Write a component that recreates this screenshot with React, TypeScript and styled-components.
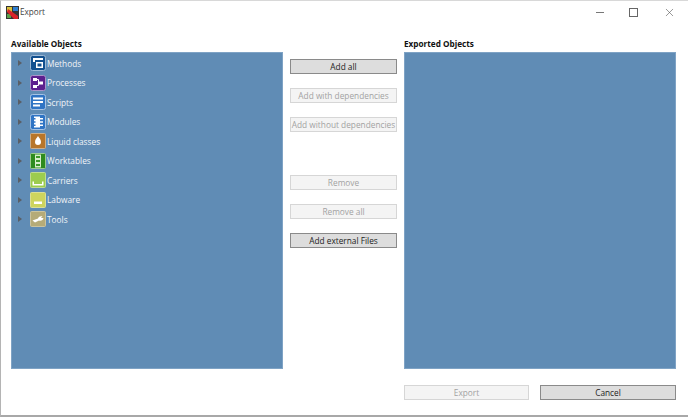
import { createGlobalStyle, styled } from "styled-components";
import { X } from "lucide-react";

const GlobalStyle = createGlobalStyle`
  html, body {
    margin: 0;
    padding: 0;
    background: #fff;
    overflow: hidden;
  }
  body {
    font-family: "Open Sans", "Noto Sans", sans-serif;
  }
`;

const trees = [
  { name: "Methods", kind: "methods" },
  { name: "Processes", kind: "processes" },
  { name: "Scripts", kind: "scripts" },
  { name: "Modules", kind: "modules" },
  { name: "Liquid classes", kind: "liquid" },
  { name: "Worktables", kind: "worktables" },
  { name: "Carriers", kind: "carriers" },
  { name: "Labware", kind: "labware" },
  { name: "Tools", kind: "tools" },
];

const TreeIcon = ({ kind }: { kind: string }) => {
  switch (kind) {
    case "methods":
      return (
        <svg width="16" height="16" viewBox="0 0 16 16">
          <rect x="0.5" y="0.5" width="15" height="15" rx="2" fill="#12508f" stroke="#9db9d6" />
          <path d="M3 3h10v2H5v2H3z" fill="#fff" />
          <path d="M6 7h7v6H6z" fill="#fff" />
          <path d="M7.5 8.500h4v3h-4z" fill="#12508f" />
        </svg>
      );
    case "processes":
      return (
        <svg width="16" height="16" viewBox="0 0 16 16">
          <rect x="0.5" y="0.5" width="15" height="15" rx="2" fill="#5c1f8e" stroke="#ab93c8" />
          <path d="M3 3h4v3H3zM9 6.500h4v3H9zM3 10h4v3H3z" fill="#fff" />
          <path d="M7 4.500h1.500v6H7M8.500 8H9" stroke="#fff" fill="none" />
        </svg>
      );
    case "scripts":
      return (
        <svg width="16" height="16" viewBox="0 0 16 16">
          <rect x="0.5" y="0.5" width="15" height="15" rx="2" fill="#2f74c4" stroke="#a6c3e4" />
          <path d="M3 3.500h10v2H3zM3 7h10v2H3zM3 10.500h7v2H3z" fill="#fff" />
        </svg>
      );
    case "modules":
      return (
        <svg width="16" height="16" viewBox="0 0 16 16">
          <rect x="0.5" y="0.5" width="15" height="15" rx="2" fill="#2f74c4" stroke="#a6c3e4" />
          <path d="M4 2.500h6v11H4z" fill="#fff" />
          <path d="M2.500 4h3v1.500h-3zM2.500 7.200h3v1.500h-3zM2.500 10.500h3V12h-3z" fill="#2f74c4" />
          <path d="M10 4h3v1.500h-3zM10 7.200h3v1.500h-3zM10 10.500h3V12h-3z" fill="#fff" />
        </svg>
      );
    case "liquid":
      return (
        <svg width="16" height="16" viewBox="0 0 16 16">
          <rect x="0.5" y="0.5" width="15" height="15" rx="1" fill="#b8762a" stroke="#cdb08c" />
          <path d="M8 3c1.200 2 3 3.600 3 6a3 3 0 0 1-6 0c0-2.400 1.800-4 3-6z" fill="#fff" />
        </svg>
      );
    case "worktables":
      return (
        <svg width="16" height="16" viewBox="0 0 16 16">
          <rect x="0.5" y="0.5" width="15" height="15" rx="1" fill="#2e8b1e" stroke="#9ccb8e" />
          <path d="M5 1.500h6v13H5z" fill="#d7ecc9" />
          <path d="M6 3h4v2H6zM6 7h4v2H6zM6 11h4v2H6z" fill="#3e9a2c" />
        </svg>
      );
    case "carriers":
      return (
        <svg width="16" height="16" viewBox="0 0 16 16">
          <rect x="0.5" y="0.5" width="15" height="15" rx="1" fill="#9ccc4f" stroke="#c0dc90" />
          <path d="M2.500 9.500h1.500V12h8V9.500h1.500V13.500h-11z" fill="#fff" />
        </svg>
      );
    case "labware":
      return (
        <svg width="16" height="16" viewBox="0 0 16 16">
          <rect x="0.5" y="0.5" width="15" height="15" rx="1" fill="#cdd45e" stroke="#dbdf95" />
          <path d="M4 9.500h8V12H4z" fill="#fff" />
        </svg>
      );
    default:
      return (
        <svg width="16" height="16" viewBox="0 0 16 16">
          <rect x="0.5" y="0.5" width="15" height="15" rx="1" fill="#b5ab78" stroke="#cbc49f" />
          <path d="M2.500 9.500 8 7.500c.7-1.800 2.300-2.500 4.500-2l-1.700 1.500 2.700.1c-.3 2-2.300 3.200-4.500 2.500L5 11.500z" fill="#fff" />
        </svg>
      );
  }
};

const App = () => {
  return (
    <>
      <GlobalStyle />
      <Window>
        <TitleBar>
          <AppLogo viewBox="0 0 13 13">
            <rect width="13" height="13" fill="#333" />
            <path d="M1 1h5v5H1z" fill="#d8c23a" />
            <path d="M7 1h5v4H7z" fill="#2f7fd0" />
            <path d="M1 8h4v4H1z" fill="#5aa048" />
            <path d="M2 3l10 7v3H8L1 6z" fill="#d8232a" />
          </AppLogo>
          <WindowTitle>Export</WindowTitle>
          <WindowControls>
            <MinimizeIcon />
            <MaximizeIcon />
            <CloseButton>
              <X size={13} strokeWidth={1.1} color="#555" />
            </CloseButton>
          </WindowControls>
        </TitleBar>
        <Content>
          <Column>
            <ColumnLabel>Available Objects</ColumnLabel>
            <ListPanel>
              {trees.map((t) => (
                <TreeRow key={t.name}>
                  <Arrow />
                  <IconSlot>
                    <TreeIcon kind={t.kind} />
                  </IconSlot>
                  <TreeLabel>{t.name}</TreeLabel>
                </TreeRow>
              ))}
            </ListPanel>
          </Column>
          <ButtonColumn>
            <ActionButton>Add all</ActionButton>
            <ActionButton disabled>Add with dependencies</ActionButton>
            <ActionButton disabled>Add without dependencies</ActionButton>
            <ActionButton disabled $gapBefore>
              Remove
            </ActionButton>
            <ActionButton disabled>Remove all</ActionButton>
            <ActionButton>Add external Files</ActionButton>
          </ButtonColumn>
          <Column>
            <ColumnLabel>Exported Objects</ColumnLabel>
            <ListPanel />
          </Column>
        </Content>
        <Footer>
          <FooterButton disabled $width={125}>
            Export
          </FooterButton>
          <FooterButton $width={136}>Cancel</FooterButton>
        </Footer>
      </Window>
    </>
  );
};

const Window = styled.div`
  box-sizing: border-box;
  width: 688px;
  height: 417px;
  background: #fff;
  border-left: 1px solid #b4b4b4;
  border-bottom: 2px solid #a8a8a8;
  border-top: 1px solid #d8d8d8;
  display: flex;
  flex-direction: column;
`;

const TitleBar = styled.div`
  height: 30px;
  flex: none;
  display: flex;
  align-items: center;
  padding: 0 12px 8px 5px;
  box-sizing: border-box;
`;

const AppLogo = styled.svg`
  width: 13px;
  height: 13px;
  margin-right: 1px;
`;

const WindowTitle = styled.span`
  font-family: "Open Sans", sans-serif;
  font-size: 8.2px;
  color: #444;
  margin-bottom: 2px;
`;

const WindowControls = styled.div`
  margin-left: auto;
  display: flex;
  align-items: center;
  gap: 25px;
`;

const MinimizeIcon = styled.div`
  width: 8px;
  height: 1px;
  background: #777;
`;

const MaximizeIcon = styled.div`
  width: 7px;
  height: 7px;
  border: 1px solid #666;
`;

const CloseButton = styled.div`
  display: flex;
`;

const Content = styled.div`
  display: grid;
  grid-template-columns: 272px 107px 272px;
  column-gap: 7px;
  padding-left: 10px;
  margin-top: 6px;
`;

const Column = styled.div`
  display: flex;
  flex-direction: column;
`;

const ColumnLabel = styled.div`
  height: 15px;
  line-height: 13px;
  font-size: 8.2px;
  font-weight: 700;
  color: #111;
`;

const ListPanel = styled.div`
  box-sizing: border-box;
  height: 317px;
  background: #608cb5;
  border: 1px solid #7fa3c5;
  padding-top: 0.5px;
`;

const TreeRow = styled.div`
  height: 19.5px;
  display: flex;
  align-items: center;
`;

const Arrow = styled.div`
  width: 0;
  height: 0;
  margin-left: 6px;
  border-left: 4px solid #5a5f66;
  border-top: 3px solid transparent;
  border-bottom: 3px solid transparent;
`;

const IconSlot = styled.div`
  display: flex;
  margin-left: 8px;
`;

const TreeLabel = styled.span`
  margin-left: 1px;
  font-size: 8.3px;
  color: #f2f5f8;
`;

const ButtonColumn = styled.div`
  display: flex;
  flex-direction: column;
  padding-top: 22px;
  gap: 14px;
`;

const ActionButton = styled.button<{ $gapBefore?: boolean }>`
  box-sizing: border-box;
  height: 15px;
  padding: 0;
  margin-top: ${(p) => (p.$gapBefore ? "29px" : "0")};
  font-family: "Open Sans", sans-serif;
  font-size: 8.3px;
  line-height: 13px;
  white-space: nowrap;
  color: #222;
  background: #dddddd;
  border: 1px solid #8a8a8a;
  &:disabled {
    color: #a2a2a2;
    background: #f4f4f4;
    border-color: #d6d6d6;
  }
`;

const Footer = styled.div`
  display: flex;
  gap: 11px;
  padding-left: 403px;
  margin-top: 16px;
`;

const FooterButton = styled(ActionButton)<{ $width: number }>`
  width: ${(p) => p.$width}px;
`;

export default App;
